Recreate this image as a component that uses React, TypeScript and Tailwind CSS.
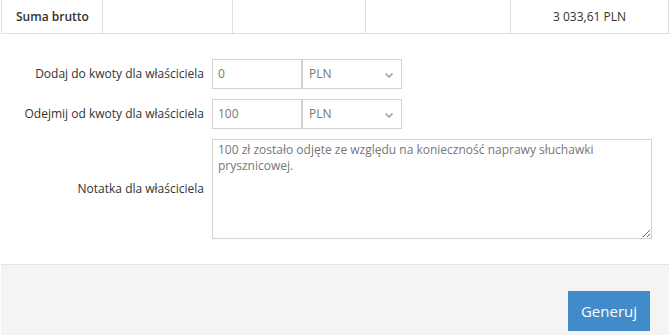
import React from "react";

const font = { fontFamily: '"Open Sans", "Noto Sans", sans-serif' };

function Chevron() {
  return (
    <svg width="10" height="7" viewBox="0 0 10 7" className="absolute right-[7px] top-[12px]">
      <path d="M1.5 1.5 L5 5 L8.5 1.5" fill="none" stroke="#999" strokeWidth="1.5" />
    </svg>
  );
}

function MoneyRow({ label, value }: { label: string; value: string }) {
  return (
    <div className="flex items-center h-[30px]">
      <div className="w-[211px] pr-[8px] text-right text-[12px] text-[#333]">{label}</div>
      <div className="w-[90px] h-[30px] border border-[#d2d2d2] flex items-center pl-[5px] text-[12px] text-[#777]">{value}</div>
      <div className="relative w-[100px] h-[30px] border border-[#d2d2d2] flex items-center pl-[6px] text-[12px] text-[#777]">
        PLN
        <Chevron />
      </div>
    </div>
  );
}

export default function App() {
  return (
    <div className="w-[670px] h-[335px] bg-white overflow-hidden pl-[1px]" style={font}>
      <div className="flex h-[34px] border-b border-[#dedede] text-[12px] text-[#333]">
        <div className="w-[102px] border-l border-r border-[#dedede] flex items-center pl-[14px] font-semibold">Suma brutto</div>
        <div className="w-[130px] border-r border-[#dedede]"></div>
        <div className="w-[133px] border-r border-[#dedede]"></div>
        <div className="w-[145px] border-r border-[#dedede]"></div>
        <div className="w-[158px] border-r border-[#dedede] flex items-center justify-center">3 033,61 PLN</div>
      </div>
      <div className="flex flex-col gap-[10px] pt-[25px]">
        <MoneyRow label="Dodaj do kwoty dla właściciela" value="0" />
        <MoneyRow label="Odejmij od kwoty dla właściciela" value="100" />
        <div className="flex items-center h-[100px]">
          <div className="w-[211px] pr-[8px] text-right text-[12px] text-[#333]">Notatka dla właściciela</div>
          <textarea
            className="w-[440px] h-[100px] border border-[#d2d2d2] px-[5px] py-[2px] text-[12px] leading-[16px] text-[#777] resize-y outline-none"
            style={font}
            defaultValue="100 zł zostało odjęte ze względu na konieczność naprawy słuchawki prysznicowej."
          />
        </div>
      </div>
      <div className="mt-[25px] w-[668px] h-[80px] border-t border-[#e3e3e3] bg-[#f4f4f4] flex justify-end items-start pt-[26px] pr-[19px]">
        <button className="w-[82px] h-[40px] bg-[#428bca] text-white text-[15px]" style={font}>Generuj</button>
      </div>
    </div>
  );
}
